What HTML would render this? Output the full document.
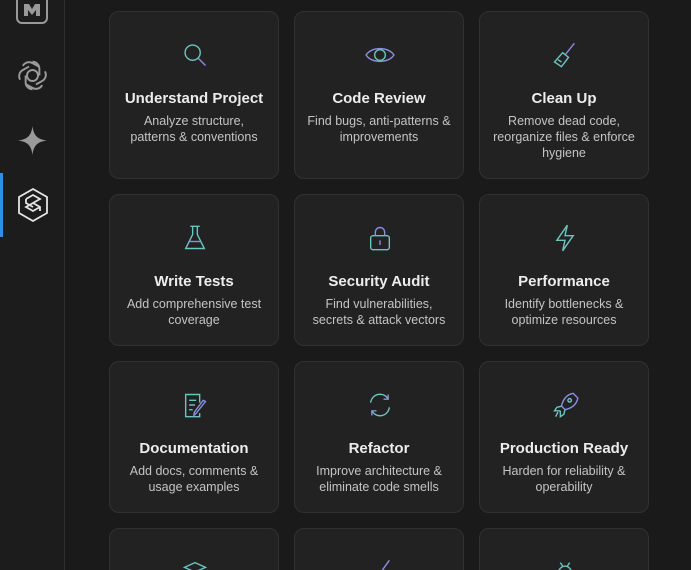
<!DOCTYPE html><html><head><style>
html,body{margin:0;width:691px;height:570px;overflow:hidden}
body{background:#1a1a1a;font-family:"Liberation Sans",sans-serif;position:relative}
.side{position:absolute;left:0;top:0;width:64px;height:570px;background:#1c1c1c;border-right:1px solid #2e2e2e}
.ind{position:absolute;left:0;top:173px;width:3px;height:64px;background:#2f8fe6}
.card{position:absolute;width:170px;background:#222;border:1px solid #313131;border-radius:10px;text-align:center;color:#ececec;box-sizing:border-box}
.card svg{position:absolute;left:71px;top:29px}
.t{position:absolute;top:78px;width:100%;font-weight:bold;font-size:15px}
.d{position:absolute;top:101px;left:6px;right:6px;font-size:12.5px;line-height:16px;color:#c4c4c4}
</style></head><body>
<div class="side"></div><div class="ind"></div>
<svg style="position:absolute;left:16px;top:-6px" width="32" height="32" viewBox="0 0 32 32"><rect x="1" y="1" width="30" height="28" rx="5" fill="none" stroke="#999" stroke-width="2"/><path d="M8 10h5l3 5 3-5h5v12h-4v-6l-4 5-4-5v6H8z" fill="#999"/></svg>
<svg style="position:absolute;left:16px;top:59px" width="33" height="33" viewBox="0 0 24 24" fill="none" stroke="#9a9a9a" stroke-width="1.4"><circle cx="12" cy="12" r="4"/><path d="M12 2a5 5 0 0 1 5 5v5M21 9a5 5 0 0 1-2 7l-4.5 2.5M19 19a5 5 0 0 1-7 2l-4.5-2.5M12 22a5 5 0 0 1-5-5v-5M3 15a5 5 0 0 1 2-7l4.5-2.5M5 5a5 5 0 0 1 7-2l4.5 2.5"/></svg>
<svg style="position:absolute;left:18px;top:126px" width="29" height="29" viewBox="0 0 24 24"><path d="M12 0C13 8 16 11 24 12C16 13 13 16 12 24C11 16 8 13 0 12C8 11 11 8 12 0Z" fill="#9a9a9a"/></svg>
<svg style="position:absolute;left:16px;top:187px" width="34" height="36" viewBox="0 0 34 36" fill="none" stroke="#e5e5e5" stroke-width="1.8"><path d="M17 2L31 10V26L17 34L3 26V10Z"/><path d="M10 12l7-4 7 4-7 4-7 4 7 4 7-4M10 12v4l7 4M24 24v-4l-7-4"/></svg>
<div class="card" style="left:109px;top:11px;height:168px"><svg width="28" height="28" viewBox="0 0 24 24" fill="none" stroke="#6bc4c0" stroke-width="1.2"><circle cx="10" cy="10" r="6.5"/><path d="M15 15l6 6" stroke="#8a8ee0"/></svg><div class="t">Understand Project</div><div class="d">Analyze structure,<br>patterns &amp; conventions</div></div>
<div class="card" style="left:294px;top:11px;height:168px"><svg width="30" height="26" viewBox="0 0 28 24" style="left:70px;top:30px" fill="none" stroke="#6bc4c0" stroke-width="1.3"><path d="M1 12C6 4 22 4 27 12C22 20 6 20 1 12Z" stroke="#8a8ee0"/><circle cx="14" cy="12" r="5"/></svg><div class="t">Code Review</div><div class="d">Find bugs, anti-patterns &amp;<br>improvements</div></div>
<div class="card" style="left:479px;top:11px;height:168px"><svg width="28" height="28" viewBox="0 0 24 24" fill="none" stroke="#6bc4c0" stroke-width="1.2"><path d="M20 2l-8 10" stroke="#8a8ee0"/><path d="M10 10l5 4-6 8-6-4z M6 16l3 2"/></svg><div class="t">Clean Up</div><div class="d">Remove dead code,<br>reorganize files &amp; enforce<br>hygiene</div></div>
<div class="card" style="left:109px;top:194px;height:152px"><svg width="28" height="28" viewBox="0 0 24 24" fill="none" stroke="#6bc4c0" stroke-width="1.2"><path d="M8 2h8M10 2v7L4 21h16L14 9V2"/><path d="M7 15h10" stroke="#8a8ee0"/></svg><div class="t">Write Tests</div><div class="d">Add comprehensive test<br>coverage</div></div>
<div class="card" style="left:294px;top:194px;height:152px"><svg width="28" height="28" viewBox="0 0 24 24" fill="none" stroke="#6bc4c0" stroke-width="1.2"><rect x="4" y="10" width="16" height="12" rx="2"/><path d="M8 10V7a4 4 0 0 1 8 0v3M12 14v4" stroke="#8a8ee0"/></svg><div class="t">Security Audit</div><div class="d">Find vulnerabilities,<br>secrets &amp; attack vectors</div></div>
<div class="card" style="left:479px;top:194px;height:152px"><svg width="28" height="28" viewBox="0 0 24 24" fill="none" stroke="#6bc4c0" stroke-width="1.2"><path d="M14 1L5 14h7l-2 9 9-13h-7z"/></svg><div class="t">Performance</div><div class="d">Identify bottlenecks &amp;<br>optimize resources</div></div>
<div class="card" style="left:109px;top:361px;height:152px"><svg width="28" height="28" viewBox="0 0 24 24" fill="none" stroke="#6bc4c0" stroke-width="1.2"><path d="M16 10V3H4v19h12v-3M7 8h6M7 12h5M7 16h3"/><path d="M21 9l-8 10-2 2 .5-3L19 8z" stroke="#8a8ee0"/></svg><div class="t">Documentation</div><div class="d">Add docs, comments &amp;<br>usage examples</div></div>
<div class="card" style="left:294px;top:361px;height:152px"><svg width="28" height="28" viewBox="0 0 24 24" fill="none" stroke="#6bc4c0" stroke-width="1.2"><path d="M4 10a8 8 0 0 1 15-3M20 14a8 8 0 0 1-15 3" /><path d="M19 3v4h-4M5 21v-4h4" stroke="#8a8ee0"/></svg><div class="t">Refactor</div><div class="d">Improve architecture &amp;<br>eliminate code smells</div></div>
<div class="card" style="left:479px;top:361px;height:152px"><svg width="28" height="28" viewBox="0 0 24 24" fill="none" stroke="#6bc4c0" stroke-width="1.2"><path d="M19 2c-6 1-9 6-10 11l3 3c5-1 10-4 11-10z" stroke="#8a8ee0"/><circle cx="16" cy="8" r="1.5"/><path d="M9 13l-4 1-2 3 5 0M12 16l-1 4-3 2v-5M6 18l-2 4"/></svg><div class="t">Production Ready</div><div class="d">Harden for reliability &amp;<br>operability</div></div>
<div class="card" style="left:109px;top:528px;height:60px"><svg width="28" height="28" viewBox="0 0 24 24" fill="none" stroke="#6bc4c0" stroke-width="1.2"><path d="M3 8l9-4 9 4-9 4z M3 12l9 4 9-4M3 16l9 4 9-4"/></svg></div>
<div class="card" style="left:294px;top:528px;height:60px"><svg width="28" height="28" viewBox="0 0 24 24" fill="none" stroke="#8a8ee0" stroke-width="1.2"><path d="M20 2L10 16"/></svg></div>
<div class="card" style="left:479px;top:528px;height:60px"><svg width="28" height="28" viewBox="0 0 24 24" fill="none" stroke="#6bc4c0" stroke-width="1.2"><ellipse cx="12" cy="14" rx="6" ry="7"/><path d="M8 4l2 3M16 4l-2 3"/></svg></div>
</body></html>
